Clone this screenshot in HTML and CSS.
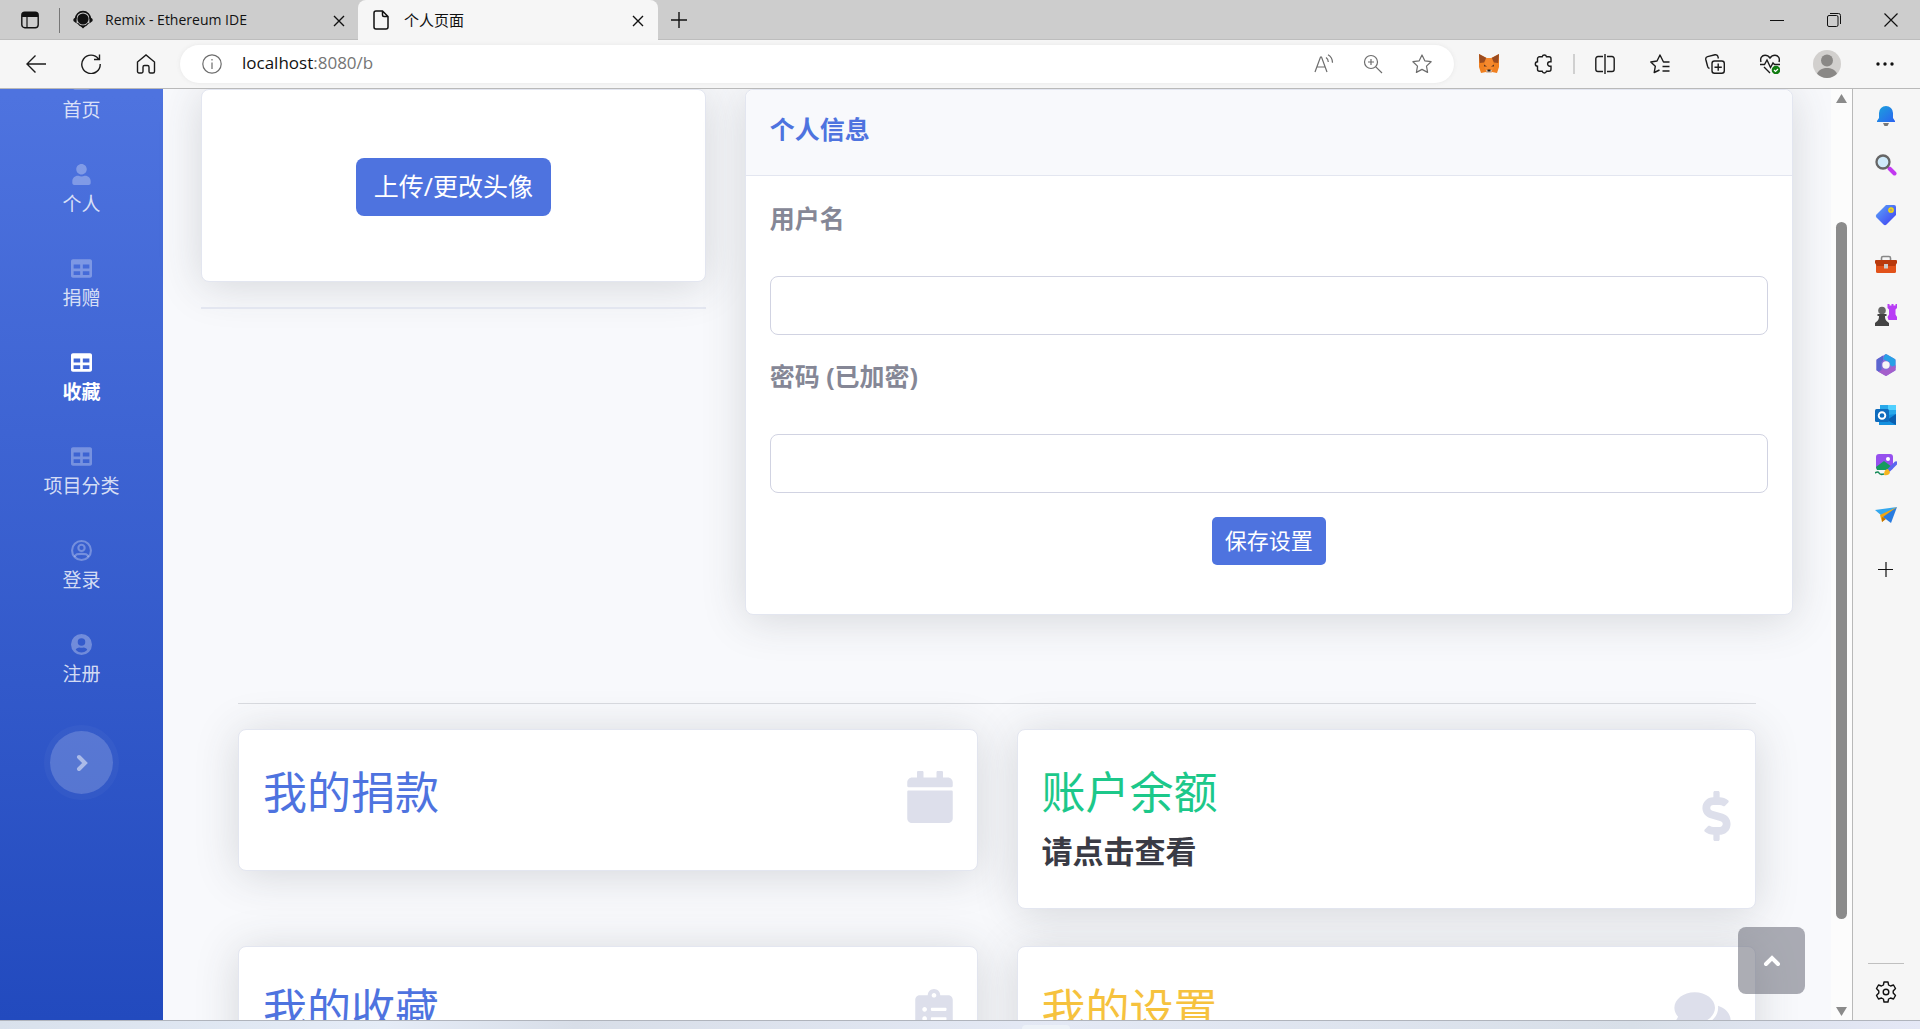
FILE: index.html
```html
<!DOCTYPE html>
<html lang="zh-CN">
<head>
<meta charset="utf-8">
<title>个人页面</title>
<link rel="stylesheet" href="styles.css">
</head>
<body>
<svg class="defs" aria-hidden="true">
  <symbol id="table" viewBox="0 0 512 512"><path d="M464 32H48C21.49 32 0 53.49 0 80v352c0 26.51 21.49 48 48 48h416c26.51 0 48-21.49 48-48V80c0-26.51-21.49-48-48-48zM224 416H64v-96h160v96zm0-160H64v-96h160v96zm224 160H288v-96h160v96zm0-160H288v-96h160v96z"/></symbol>
  <symbol id="close" viewBox="0 0 12 12"><path d="M1 1l10 10M11 1L1 11" fill="none" stroke="#111" stroke-width="1.4"/></symbol>
</svg>
<div class="browser">
  <header class="tabs">
    <button class="tab-actions" aria-label="标签操作"><svg width="18" height="18" viewBox="0 0 18 18"><rect x=".8" y="1.3" width="16.4" height="15.4" rx="3" fill="none" stroke="#111" stroke-width="1.4"/><path d="M1 6V4a3 3 0 0 1 3-3h10a3 3 0 0 1 3 3v2z" fill="#111"/><path d="M6 6v11" stroke="#111" stroke-width="1.2"/></svg></button>
    <div class="tab">
      <svg width="20" height="20" viewBox="0 0 20 20"><circle cx="10" cy="9" r="5.6" fill="#111"/><path d="M2.6 9a7.4 7.4 0 0 1 14.8 0" fill="none" stroke="#111" stroke-width="1.6"/><path d="M3.6 6.500L.4 9v2l3.200 2.500zM16.400 6.500l3.200 2.500v2l-3.200 2.500zM7 15.500h6L10 18.500z" fill="#111"/><path d="M4.500 13c1.500 2.500 3 3 5.500 3.400 2.500-.4 4-.9 5.500-3.400" fill="none" stroke="#111" stroke-width="1.2"/></svg>
      <span>Remix - Ethereum IDE</span>
      <button aria-label="关闭"><svg width="12" height="12"><use href="#close"/></svg></button>
    </div>
    <div class="tab active">
      <svg width="16" height="20" viewBox="0 0 16 20"><path d="M9.500 1H3a2 2 0 0 0-2 2v14a2 2 0 0 0 2 2h10a2 2 0 0 0 2-2V6.500zM9.500 1v4a1.500 1.500 0 0 0 1.500 1.500h4" fill="none" stroke="#111" stroke-width="1.500"/></svg>
      <span>个人页面</span>
      <button aria-label="关闭"><svg width="12" height="12"><use href="#close"/></svg></button>
    </div>
    <button class="new-tab" aria-label="新建标签页"><svg width="16" height="16" viewBox="0 0 16 16"><path d="M8 0v16M0 8h16" stroke="#111" stroke-width="1.400"/></svg></button>
    <div class="window-buttons">
      <button aria-label="最小化"><svg width="14" height="14" viewBox="0 0 14 14"><path d="M0 7.500h14" stroke="#111"/></svg></button>
      <button aria-label="还原"><svg width="14" height="14" viewBox="0 0 14 14" fill="none" stroke="#111"><rect x=".5" y="2.500" width="10.500" height="11" rx="1.500"/><path d="M3 .5h8.500a2 2 0 0 1 2 2V11"/></svg></button>
      <button aria-label="关闭窗口"><svg width="14" height="14" viewBox="0 0 14 14"><path d="M.5.5l13 13M13.500.5l-13 13" stroke="#111" stroke-width="1.200"/></svg></button>
    </div>
  </header>
  <div class="toolbar">
    <button aria-label="后退"><svg width="20" height="20" viewBox="0 0 20 20"><path d="M20 10H1M9.500 1.500L1 10l8.500 8.500"/></svg></button>
    <button aria-label="刷新"><svg width="20" height="20" viewBox="0 0 20 20"><path d="M17.500 5A9.200 9.200 0 1 0 19.200 10M18.500.5V5.500H13"/></svg></button>
    <button aria-label="主页"><svg width="20" height="20" viewBox="0 0 20 20"><path d="M1.500 8L10 1l8.500 7v9.500a1.500 1.500 0 0 1-1.500 1.500h-2.500a1.500 1.500 0 0 1-1.500-1.500V13a1.500 1.500 0 0 0-1.500-1.500h-3A1.500 1.500 0 0 0 7 13v4.500A1.500 1.500 0 0 1 5.500 19H3a1.500 1.500 0 0 1-1.500-1.500z"/></svg></button>
    <div class="address">
      <svg class="info" width="20" height="20" viewBox="0 0 20 20"><circle cx="10" cy="10" r="9.200"/><path d="M10 8.500V15M10 5v1.500"/></svg>
      <span class="url">localhost<i>:8080/b</i></span>
      <button aria-label="朗读"><svg width="20" height="20" viewBox="0 0 20 20"><path d="M1 18L6.500 3h1L13 18M3 13h8M12 3.500c1.500 1 2.300 2.500 2.300 4.500M14 .8c3 1.700 4.500 4.500 4.500 8"/></svg></button>
      <button aria-label="缩放"><svg width="20" height="20" viewBox="0 0 20 20"><circle cx="8" cy="8" r="6.500"/><path d="M12.800 12.800L19 19M8 5v6M5 8h6"/></svg></button>
      <button aria-label="收藏此页"><svg width="20" height="20" viewBox="0 0 20 20"><path d="M10 1l2.800 5.800 6.300.9-4.600 4.400 1.100 6.300L10 15.400l-5.600 3 1.100-6.300L.9 7.700l6.300-.9z" stroke-linejoin="round"/></svg></button>
    </div>
    <div class="extensions">
      <button aria-label="MetaMask"><svg width="20" height="20" viewBox="0 0 20 20"><g stroke="none"><path d="M0 0l7.500 4h5L20 0v13l-2 6-5-1-1.500 1h-3L7 18l-5 1-2-6z" fill="#f08020"/><path d="M0 0l7.500 4L5 8.500.8 9zM20 0l-7.500 4L15 8.500l4.200.500z" fill="#9a4b20"/><path d="M7 4h6l2 9-2 4H7l-2-4z" fill="#f6892d"/><path d="M5 10.500l3 2H5zM15 10.500l-3 2h3z" fill="#5a3420"/><path d="M7 16h6l-1 3H8z" fill="#d9c3b4"/><path d="M8.500 15.500h3v2h-3z" fill="#222"/></g></svg></button>
      <button aria-label="扩展"><svg width="20" height="20" viewBox="0 0 20 20"><path d="M5.500 2.800h2.700a2.200 2.200 0 0 1 4.300 0H15a2 2 0 0 1 2 2v3h-1.200a2.200 2.200 0 0 0 0 4.400H17v3a2 2 0 0 1-2 2h-2.500a2.200 2.200 0 0 1-4.300 0H5.500a2 2 0 0 1-2-2v-3a2.200 2.200 0 0 1 0-4.400v-3a2 2 0 0 1 2-2z"/></svg></button>
      <span class="divider"></span>
      <button aria-label="分屏"><svg width="20" height="20" viewBox="0 0 20 20"><path d="M8 2.500H3A2.200 2.200 0 0 0 .8 4.700v10.600A2.200 2.200 0 0 0 3 17.500h5M12 2.500h5a2.200 2.200 0 0 1 2.200 2.200v10.600a2.200 2.200 0 0 1-2.200 2.200h-5M10 0v20"/></svg></button>
      <button aria-label="收藏夹"><svg width="20" height="20" viewBox="0 0 20 20"><path d="M19.500 8h-6L10 1 7 7l-6.200 1 4.500 4.300L4.200 18.500 9.500 16M12.500 12.500h7M12.500 17h7" stroke-linejoin="round"/></svg></button>
      <button aria-label="集锦"><svg width="20" height="20" viewBox="0 0 20 20"><rect x="7" y="7" width="12.300" height="12.300" rx="2.500"/><path d="M13.200 9.500v7.300M9.500 13.200h7.300M4.500 14.500A3 3 0 0 1 2.500 12L.8 5.500A2.500 2.500 0 0 1 2.600 2.600L10 .8a2.500 2.500 0 0 1 3 2l.4 1.700"/></svg></button>
      <button aria-label="浏览器概要"><svg width="20" height="20" viewBox="0 0 20 20"><path d="M1 8C-.2 4 2 1.200 5 1.200c2.200 0 3.800 1 5 2.800 1.200-1.800 2.800-2.800 5-2.800 3 0 5.200 2.800 4 6.800M0 10.500h4.500L7 6l3.500 7.500 2.500-4.500 1.500 1.500H20M4 13l6 6"/><circle cx="16" cy="16" r="4.300" fill="#107c10" stroke="none"/><path d="M14 16l1.500 1.500L18 15" stroke="#fff" stroke-width="1.200"/></svg></button>
      <button class="profile" aria-label="个人资料"><svg width="28" height="28" viewBox="0 0 28 28"><g stroke="none"><circle cx="14" cy="14" r="14" fill="#d2d0ce"/><circle cx="14" cy="10.500" r="6" fill="#8a8886"/><path d="M4 23.800C6 19.500 10 18 14 18s8 1.500 10 5.800A14 14 0 0 1 4 23.800z" fill="#8a8886"/></g></svg></button>
      <button aria-label="设置及其他"><svg width="18" height="4" viewBox="0 0 18 4"><g fill="#111" stroke="none"><circle cx="2" cy="2" r="1.700"/><circle cx="9" cy="2" r="1.700"/><circle cx="16" cy="2" r="1.700"/></g></svg></button>
    </div>
  </div>
  <div class="view">
    <div class="page">
      <nav class="sidebar">
        <a href="#"><svg viewBox="0 0 512 512"><path d="M48 100h416v330q0 50-50 50H98q-50 0-50-50z"/></svg><span>首页</span></a>
        <a href="#"><svg viewBox="0 0 448 512"><path d="M224 256c70.700 0 128-57.300 128-128S294.700 0 224 0 96 57.300 96 128s57.300 128 128 128zm89.600 32h-16.700c-22.200 10.200-46.900 16-72.900 16s-50.600-5.800-72.900-16h-16.700C60.200 288 0 348.200 0 422.400V464c0 26.500 21.500 48 48 48h352c26.500 0 48-21.500 48-48v-41.600c0-74.200-60.200-134.400-134.400-134.400z"/></svg><span>个人</span></a>
        <a href="#"><svg><use href="#table"/></svg><span>捐赠</span></a>
        <a href="#" class="current"><svg><use href="#table"/></svg><span>收藏</span></a>
        <a href="#"><svg><use href="#table"/></svg><span>项目分类</span></a>
        <a href="#"><svg viewBox="0 0 20 20"><g fill="none" stroke="currentColor" stroke-width="2"><circle cx="10" cy="10" r="9"/><circle cx="10" cy="7.500" r="3"/><path d="M3.500 16c1-2.500 2.500-2.800 6.500-2.800s5.500.3 6.500 2.800"/></g></svg><span>登录</span></a>
        <a href="#"><svg viewBox="0 0 20 20"><path fill-rule="evenodd" d="M10 0a10 10 0 1 0 0 20 10 10 0 0 0 0-20zm0 4a3.600 3.600 0 1 1 0 7.200A3.600 3.600 0 0 1 10 4zm0 13.500c-2.300 0-4.300-1-5.500-2.500.6-1.300 1.900-2.200 3.500-2.200 1.300.5 2.700.5 4 0 1.600 0 2.900.9 3.500 2.200-1.200 1.500-3.200 2.500-5.500 2.500z"/></svg><span>注册</span></a>
        <button class="toggle" aria-label="展开侧栏"><svg viewBox="0 0 12 18"><path d="M3 3l6 6-6 6"/></svg></button>
      </nav>
      <main>
        <div class="columns">
          <section class="avatar-column">
            <div class="card avatar-card"><button class="btn btn-large">上传/更改头像</button></div>
            <hr>
          </section>
          <section class="card info-card">
            <h2>个人信息</h2>
            <form>
              <label for="username">用户名</label>
              <input id="username" type="text">
              <label for="password">密码 (已加密)</label>
              <input id="password" type="password">
              <button class="btn" type="button">保存设置</button>
            </form>
          </section>
        </div>
        <section class="links">
          <hr>
          <div class="tiles">
            <article class="card tile blue">
              <div><h3>我的捐款</h3></div>
              <svg width="46" height="52" viewBox="0 0 448 512"><path d="M12 192h424c6.600 0 12 5.400 12 12v260c0 26.500-21.500 48-48 48H48c-26.500 0-48-21.500-48-48V204c0-6.600 5.400-12 12-12zm436-44v-36c0-26.500-21.500-48-48-48h-48V12c0-6.600-5.400-12-12-12h-40c-6.600 0-12 5.400-12 12v52H160V12c0-6.600-5.400-12-12-12h-40c-6.600 0-12 5.400-12 12v52H48C21.500 64 0 85.500 0 112v36c0 6.600 5.400 12 12 12h424c6.600 0 12-5.400 12-12z"/></svg>
            </article>
            <article class="card tile green">
              <div><h3>账户余额</h3><p>请点击查看</p></div>
              <svg width="29" height="50" viewBox="0 0 288 512"><path d="M209.200 233.400l-108-31.600C88.700 198.200 80 186.500 80 173.500c0-16.300 13.200-29.500 29.500-29.500h66.300c12.200 0 24.200 3.700 34.200 10.500 6.100 4.100 14.300 3.100 19.500-2l34.800-34c7.100-6.900 6.100-18.400-1.800-24.500C238 74.800 207.400 64.100 176 64V16c0-8.800-7.200-16-16-16h-32c-8.800 0-16 7.200-16 16v48h-2.500C45.800 64-5.400 118.700.5 183.600c4.200 46.100 39.400 83.600 83.800 96.600l102.500 30c12.500 3.700 21.200 15.300 21.200 28.300 0 16.300-13.200 29.500-29.500 29.500h-66.300C100 368 88 364.300 78 357.500c-6.100-4.100-14.300-3.100-19.500 2l-34.800 34c-7.100 6.900-6.100 18.400 1.800 24.500 24.500 19.200 55.100 29.900 86.500 30v48c0 8.800 7.200 16 16 16h32c8.800 0 16-7.200 16-16v-48.200c46.600-.9 90.300-28.600 105.700-72.700 21.500-61.600-14.600-124.800-72.500-141.700z"/></svg>
            </article>
            <article class="card tile blue">
              <div><h3>我的收藏</h3></div>
              <svg width="38" height="50" viewBox="0 0 384 512"><path d="M336 64h-80c0-35.300-28.700-64-64-64s-64 28.700-64 64H48C21.500 64 0 85.500 0 112v352c0 26.500 21.500 48 48 48h288c26.500 0 48-21.500 48-48V112c0-26.500-21.500-48-48-48zM96 424c-13.300 0-24-10.700-24-24s10.700-24 24-24 24 10.700 24 24-10.700 24-24 24zm0-96c-13.300 0-24-10.700-24-24s10.700-24 24-24 24 10.700 24 24-10.700 24-24 24zm0-96c-13.300 0-24-10.700-24-24s10.700-24 24-24 24 10.700 24 24-10.700 24-24 24zm96-192c13.300 0 24 10.700 24 24s-10.700 24-24 24-24-10.700-24-24 10.700-24 24-24zm128 368c0 4.400-3.600 8-8 8H168c-4.400 0-8-3.600-8-8v-16c0-4.400 3.600-8 8-8h144c4.400 0 8 3.600 8 8v16zm0-96c0 4.400-3.600 8-8 8H168c-4.400 0-8-3.600-8-8v-16c0-4.400 3.600-8 8-8h144c4.400 0 8 3.600 8 8v16zm0-96c0 4.400-3.600 8-8 8H168c-4.400 0-8-3.600-8-8v-16c0-4.400 3.600-8 8-8h144c4.400 0 8 3.600 8 8v16z"/></svg>
            </article>
            <article class="card tile yellow">
              <div><h3>我的设置</h3></div>
              <svg width="57" height="50" viewBox="0 0 576 512"><path d="M416 192c0-88.400-93.100-160-208-160S0 103.600 0 192c0 34.300 14.100 65.900 38 92-13.400 30.200-35.500 54.200-35.800 54.500-2.200 2.300-2.800 5.700-1.500 8.700S4.800 352 8 352c36.600 0 66.900-12.300 88.700-25 32.200 15.700 70.300 25 111.300 25 114.900 0 208-71.600 208-160zm122 220c23.900-26 38-57.700 38-92 0-66.900-53.500-124.200-129.300-148.100.9 6.600 1.300 13.300 1.300 20.100 0 105.900-107.700 192-240 192-10.800 0-21.300-.8-31.700-1.900C207.800 439.600 281.800 480 368 480c41 0 79.100-9.200 111.300-25 21.800 12.700 52.100 25 88.700 25 3.200 0 6.100-1.900 7.300-4.800 1.300-2.900.7-6.300-1.500-8.700-.3-.2-22.400-24.200-35.800-54.500z"/></svg>
            </article>
          </div>
        </section>
      </main>
      <a class="to-top" href="#" aria-label="返回顶部"><svg width="18" height="12" viewBox="0 0 18 12"><path d="M3 9l6-6 6 6"/></svg></a>
    </div>
    <div class="scrollbar">
      <svg width="11" height="9" viewBox="0 0 11 9"><path d="M5.500 0L11 9H0z"/></svg>
      <div class="track"><div class="thumb"></div></div>
      <svg width="11" height="9" viewBox="0 0 11 9"><path d="M5.500 9L11 0H0z"/></svg>
    </div>
    <aside class="edge-bar">
      <button aria-label="通知"><svg viewBox="0 0 22 22"><defs><linearGradient id="bell" x2="1" y2="1"><stop offset="0" stop-color="#1ba4dc"/><stop offset="1" stop-color="#2b62f0"/></linearGradient></defs><path d="M2 17l2-3V9a7 7 0 0 1 14 0v5l2 3v1H2z" fill="url(#bell)"/><path d="M8 19h6l-1.500 3h-3z" fill="#777"/></svg></button>
      <button aria-label="搜索"><svg viewBox="0 0 22 22"><path d="M14.500 14.500l5 5" stroke="#c239f0" stroke-width="4" stroke-linecap="round"/><circle cx="8" cy="8" r="6.500" fill="#cfeafa" stroke="#666" stroke-width="2.300"/></svg></button>
      <button aria-label="购物"><svg viewBox="0 0 22 22"><defs><linearGradient id="tag" x2="1" y2="1"><stop offset="0" stop-color="#5ba7f8"/><stop offset="1" stop-color="#403bf2"/></linearGradient></defs><path d="M11 1h8q2 0 2 2v8L11.500 20.500q-1.500 1.500-3 0l-7-7q-1.500-1.500 0-3z" fill="url(#tag)"/><circle cx="16" cy="6" r="2.200" fill="#bfa66a" stroke="#fbe000" stroke-width="1.300"/></svg></button>
      <button aria-label="工具"><svg viewBox="0 0 22 22"><path d="M6.500 7V4q0-1.500 1.500-1.500h6q1.500 0 1.500 1.500v3" fill="none" stroke="#888" stroke-width="1.600"/><rect x="1" y="9" width="20" height="10" rx="1.500" fill="#e2521a"/><path d="M0 7q0-1 1-1h20q1 0 1 1v2l-2 3H2L0 9z" fill="#b93a0d"/><rect x="9" y="10" width="4" height="4.500" fill="#ccc"/></svg></button>
      <button aria-label="游戏"><svg viewBox="0 0 22 22"><path d="M12.500 0h2v1.500h2V0h2v1.500h2V0H22v4l-1.500 1.500v5L22 13v3h-8.500l-1-3 1.500-2.500v-5L12.500 4z" fill="#b83df5"/><circle cx="7" cy="6.500" r="3.800" fill="#666"/><path d="M2.500 10h9v2H10c0 3 .5 4.500 4 7v3H0v-3c3.500-2.500 4-4 4-7H2.500z" fill="#444"/></svg></button>
      <button aria-label="Microsoft 365"><svg viewBox="0 0 22 22"><path d="M11 0l9.500 5.500v11L11 22l-9.500-5.500v-11z" fill="#8a6bd8"/><path d="M10 .5q1-.7 2 0l7.500 4.300q1 .6 1 1.700V14L15 11V8.500L8 5z" fill="#28a0e6"/><path d="M20.500 11v5L12 21.500q-1 .7-2 0L3 17.500l4-2.500 4 1.500L20.500 11z" fill="#a45ecb"/><path d="M1.500 6.500q0-1 1-1.600L8 1.500V7l-1.500 1v8l-3 1.500-2-1.500z" fill="#5a66cf"/><circle cx="11" cy="11" r="3.700" fill="#f6f6f6"/></svg></button>
      <button aria-label="Outlook"><svg viewBox="0 0 22 22"><rect x="5" y="1" width="16" height="11" fill="#28a8ea"/><path d="M13 1h8v5h-8z" fill="#50d0ff"/><path d="M4 12l17-2v11H4z" fill="#1490df"/><path d="M12 16l9-6v11z" fill="#0a5fb0"/><rect y="5" width="14" height="13" rx="1.500" fill="#0f6cbd"/><circle cx="7" cy="11.500" r="3.300" fill="none" stroke="#fff" stroke-width="1.900"/></svg></button>
      <button aria-label="绘图"><svg viewBox="0 0 22 22"><rect x="1" width="17" height="16" rx="3" fill="#9650ee"/><circle cx="13" cy="5" r="2" fill="#fff"/><path d="M1 13l8-6 8 6-5 3H2z" fill="#169b5d"/><path d="M0 19q3-2 4 0t5 1" fill="none" stroke="#158a58" stroke-width="1.600"/><path d="M14 16l7-7" stroke="#5a67ef" stroke-width="3.500" stroke-linecap="round"/><path d="M9 21q0-6 4-6l2 3q-1 4-6 3z" fill="#f6b51e"/></svg></button>
      <button aria-label="Drop"><svg viewBox="0 0 22 22"><path d="M0 6l22-3-15 9z" fill="#35a8ee"/><path d="M22 3L5 11l2 7z" fill="#f2a50f"/><path d="M22 3L8 13l8 6z" fill="#287be0"/><path d="M7 13v5l4-3z" fill="#c47400"/></svg></button>
      <button class="add" aria-label="自定义"><svg viewBox="0 0 22 22"><path d="M11 4v15M3 11.500h15" stroke="#111" stroke-width="1.200"/></svg></button>
      <div class="edge-settings"><button aria-label="设置"><svg viewBox="0 0 22 22"><path d="M9 1h4l.6 3 1.900 1 3-1 2 3.500L18.200 10v2l2.300 2.500-2 3.500-3-1-1.900 1-.6 3H9l-.6-3-1.900-1-3 1-2-3.500L3.800 12v-2L1.500 7.500l2-3.500 3 1 1.900-1z" fill="none" stroke="#111" stroke-width="1.400" stroke-linejoin="round"/><circle cx="11" cy="11" r="2.800" fill="none" stroke="#111" stroke-width="1.400"/></svg></button></div>
    </aside>
  </div>
  <footer class="taskbar"><span></span></footer>
</div>
</body>
</html>
```
FILE: styles.css
```css
* { box-sizing: border-box; }
body { margin: 0; font-family: "Open Sans", "Noto Sans CJK SC", sans-serif; }
button { border: 0; padding: 0; background: none; font: inherit; color: inherit; }
h2, h3, p, hr { margin: 0; }
hr { border: 0; }
svg { display: block; flex: none; }
.defs { width: 0; height: 0; position: absolute; }

.browser { display: flex; flex-direction: column; height: 100vh; overflow: hidden; background: #f6f6f6; }

/* Tab strip */
.tabs { display: flex; align-items: stretch; flex: none; height: 40px; background: #cdcdcd; font-size: 14px; color: #111; box-shadow: inset 0 -1px #bdbdbd; }
.tab-actions { display: flex; align-items: center; justify-content: center; width: 60px; flex: none; position: relative; }
.tab-actions::after { content: ""; position: absolute; right: 0; top: 8px; width: 1px; height: 25px; background: #777; }
.tab { display: flex; align-items: center; gap: 12px; width: 298px; padding: 0 13px 1px; }
.tab span { flex: 1; padding-bottom: 1px; }
.tab button { padding: 2px 0 0; }
.tab.active { width: 300px; gap: 15px; padding: 0 14px 1px 15px; background: #f6f6f6; border-radius: 8px 8px 0 0; font-size: 15px; }
.new-tab { width: 42px; display: grid; place-items: center; }
.window-buttons { display: flex; margin: 0 1px 1px auto; }
.window-buttons button { width: 57px; display: grid; place-items: center; }

/* Toolbar */
.toolbar { display: flex; align-items: center; flex: none; height: 49px; padding: 0 8px 1px; border-bottom: 1px solid #b9b9b9; }
.toolbar button { display: grid; place-items: center; width: 55px; height: 46px; flex: none; }
.toolbar svg { fill: none; stroke: #1b1b1b; stroke-width: 1.4px; }
.address { flex: 1; display: flex; align-items: center; height: 38px; margin: 0 7px; padding: 0 8px 0 22px; border-radius: 19px; background: #fff; box-shadow: 0 0 4px #e6e6e6; }
.address svg { stroke: #6d6d6d; stroke-width: 1.2px; }
.address button { width: 49px; }
.url { flex: 1; padding: 0 0 2px 20px; font-size: 17px; color: #111; }
.url i { font-style: normal; color: #757575; }
.extensions { display: flex; align-items: center; }
.divider { width: 2px; height: 20px; margin: 0 2px; background: #d0d0d0; }
.toolbar .profile { width: 60px; }

/* Viewport */
.view { flex: 1; min-height: 0; display: flex; }
.page { flex: 1; min-width: 0; position: relative; display: flex; overflow: hidden; background: #f8f9fc; }
.sidebar { flex: none; width: 163px; padding-bottom: 320px; margin-top: -32px; display: flex; flex-direction: column; align-items: center; background: linear-gradient(#4e73df 4%, #224abe); }
.sidebar a { display: flex; flex-direction: column; align-items: center; flex: none; height: 94px; padding-top: 13px; gap: 5px; color: rgba(255, 255, 255, .8); font-size: 19px; line-height: 28px; text-decoration: none; }
.sidebar a svg { width: 21px; height: 21px; fill: currentColor; color: rgba(255, 255, 255, .3); }
.sidebar .current, .sidebar .current svg { color: #fff; font-weight: 700; }
.toggle { flex: none; width: 75px; height: 75px; margin-top: 10px; display: grid; place-items: center; border: 6px solid rgba(255, 255, 255, .03); border-radius: 50%; background: rgba(255, 255, 255, .2); background-clip: padding-box; }
.toggle svg { width: 12px; height: 18px; fill: none; stroke: rgba(255, 255, 255, .5); stroke-width: 4px; stroke-linecap: round; }

main { flex: 1; min-width: 0; padding: 0 38px; }
.columns { display: grid; grid-template-columns: repeat(12, minmax(0, 1fr)); column-gap: 39px; align-items: start; }
.card { background: #fff; border: 1px solid #e3e6f0; border-radius: 8px; box-shadow: 0 4px 44px rgba(58, 59, 69, .18); }
.avatar-column { grid-column: span 4; }
.avatar-card { display: flex; justify-content: center; padding: 68px 24px 65px; }
.avatar-column hr { height: 2px; margin-top: 25px; background: #e3e6f0; }
.btn { height: 48px; padding: 0 13px 2px; border-radius: 5px; background: #4e73df; color: #fff; font-size: 22px; line-height: 32px; }
.btn-large { height: 58px; padding: 0 18px 2px; border-radius: 8px; font-size: 25px; }
.info-card { grid-column: span 8; }
.info-card h2 { padding: 21px 24px 28px; border-bottom: 1px solid #e3e6f0; border-radius: 8px 8px 0 0; background: #f8f9fc; color: #4e73df; font-size: 25px; line-height: 36px; }
.info-card form { display: flex; flex-direction: column; padding: 25px 24px 49px; }
.info-card label { margin-bottom: 41px; color: #858796; font-size: 25px; font-weight: 700; line-height: 34px; }
.info-card input { height: 59px; margin-bottom: 24px; padding: 0 18px; border: 1px solid #d1d3e2; border-radius: 8px; background: #fff; font: inherit; font-size: 25px; }
.info-card .btn { align-self: center; }

.links { padding: 88px 37px 0; }
.links hr { height: 1px; margin-bottom: 25px; background: #d9dbe0; }
.tiles { display: grid; grid-template-columns: repeat(2, minmax(0, 1fr)); gap: 37px 39px; align-items: start; }
.tile { display: flex; align-items: center; justify-content: space-between; padding: 37px 24px 38px; }
.tile svg { margin-bottom: 5px; fill: #dddfeb; }
.tile h3 { margin-bottom: 14px; font-size: 44px; font-weight: 400; line-height: 51px; }
.tile p { color: #3a3b45; font-size: 31px; font-weight: 700; line-height: 38px; }
.blue h3 { color: #4e73df; }
.green h3 { color: #1cc88a; }
.yellow h3 { color: #f6c23e; }
.to-top { position: absolute; right: 26px; bottom: 26px; display: grid; place-items: center; width: 67px; height: 67px; border-radius: 8px; background: rgba(90, 92, 105, .5); }
.to-top path { fill: none; stroke: #fff; stroke-width: 4px; stroke-linecap: round; }

.scrollbar { flex: none; width: 21px; display: flex; flex-direction: column; align-items: center; padding: 5px 0 4px; background: #fcfcfc; }
.scrollbar svg { fill: #8b8b8b; }
.track { flex: 1; width: 11px; padding: 119px 0 88px; }
.thumb { height: 100%; border-radius: 6px; background: #8b8b8b; }

.edge-bar { flex: none; width: 68px; display: flex; flex-direction: column; align-items: center; padding: 1px 2px 0 0; border-left: 1px solid #b9b9b9; }
.edge-bar button { display: grid; place-items: center; width: 50px; height: 50px; flex: none; }
.edge-bar svg { width: 22px; height: 22px; }
.edge-bar .add { margin-top: 4px; }
.edge-settings { margin-top: auto; width: 36px; display: grid; justify-content: center; padding: 3px 0; border-top: 1px solid #c0c0c0; }
.taskbar { flex: none; height: 9px; padding-left: 1022px; border-top: 1px solid #b0b4bc; background: linear-gradient(90deg, #d9e1ec, #e5ecf7 20%, #d8dee8 30%, #e4e9f5 55%, #d8dfe8 85%, #e5e8f6); }
.taskbar span { display: block; width: 48px; height: 4px; margin-top: 4px; border-radius: 4px 4px 0 0; background: #edf2f8; }
```
